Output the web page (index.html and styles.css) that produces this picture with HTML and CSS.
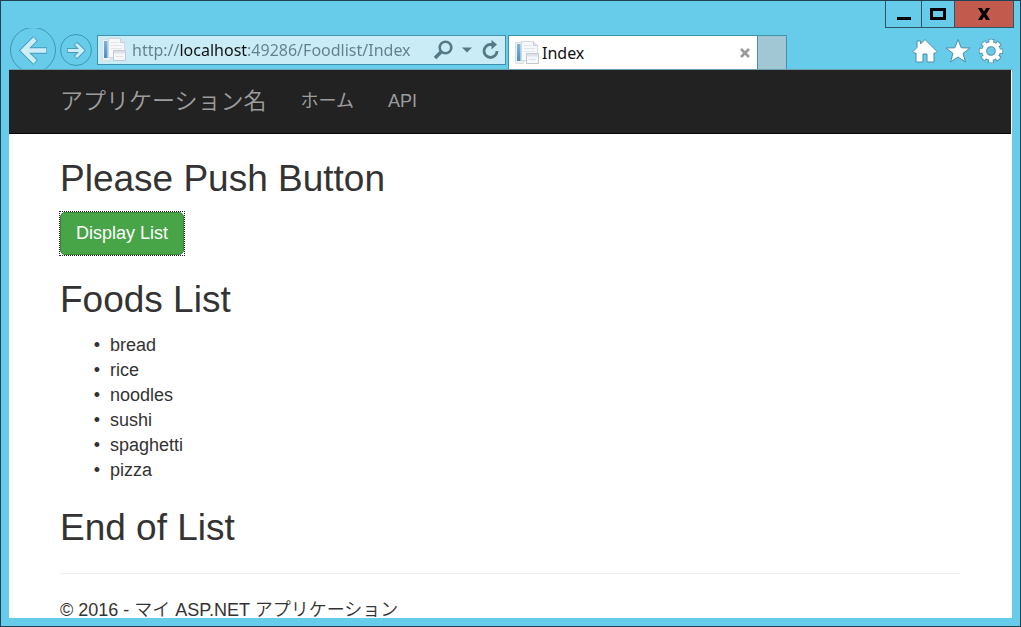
FILE: index.html
```html
<!DOCTYPE html>
<html lang="ja">
<head>
<meta charset="utf-8">
<title>Index</title>
<link rel="stylesheet" href="styles.css">
</head>
<body>
<div class="window">
  <div class="titlebar">
    <button class="win-btn minimize" type="button" aria-label="Minimize"><svg width="16" height="16" viewBox="0 0 16 16"><path d="M1 11h14v3H1z"/></svg></button>
    <button class="win-btn maximize" type="button" aria-label="Maximize"><svg width="16" height="12" viewBox="0 0 16 12"><path fill-rule="evenodd" d="M0 0h16v12H0zM3 3v6h10V3z"/></svg></button>
    <button class="win-btn close" type="button" aria-label="Close"><svg width="14" height="12" viewBox="0 0 14 12"><path d="M1 0h4l2 3.500L9 0h4L9.200 6 13 12H9L7 8.500 5 12H1l3.800-6z"/></svg></button>
  </div>

  <div class="toolbar">
    <button class="nav-btn back" type="button" aria-label="Back"><svg width="48" height="42" viewBox="0 0 48 42" fill="none"><circle cx="24" cy="22" r="22.500" stroke="#3f96b3"/><path d="M26.500 10.500 14.500 22.500l12 12M14 22.500h24" stroke="#459bb8" stroke-width="6.500"/><path d="M26 11 14.500 22.500 26 34M14 22.500h23.300" stroke="#cdeef8" stroke-width="4.600"/></svg></button>
    <button class="nav-btn forward" type="button" aria-label="Forward"><svg width="35" height="42" viewBox="0 0 35 42" fill="none"><circle cx="19" cy="22" r="15.500" stroke="#3f96b3"/><path d="m18.500 15.500 7 7-7 7M26 22.500H10" stroke="#459bb8" stroke-width="4.800"/><path d="m19 16 6.500 6.500L19 29M26 22.500H10.800" stroke="#cdeef8" stroke-width="3"/></svg></button>

    <form class="address">
      <svg class="page-icon" width="24" height="24" viewBox="0 0 24 24" aria-hidden="true"><use href="#page"/></svg>
      <input class="url" type="text" aria-label="Address" value="http://localhost:49286/Foodlist/Index">
      <div class="address-tools">
        <button class="tool search" type="submit" aria-label="Search"><svg width="20" height="20" viewBox="0 0 20 20" fill="none" stroke="#547a86"><circle cx="12.500" cy="7.500" r="5.800" stroke-width="2.600"/><path d="m8.500 11.500-6.500 6.500" stroke-width="3.600"/></svg></button>
        <button class="tool menu" type="button" aria-label="Show address list"><svg width="10" height="6" viewBox="0 0 10 6"><path d="M0 .5h10l-5 5z" fill="#547a86"/></svg></button>
        <button class="tool refresh" type="button" aria-label="Refresh"><svg width="18" height="20" viewBox="0 0 18 20"><path d="M11 4.500H9.500a6.500 6.500 0 1 0 6.500 6.500" fill="none" stroke="#547a86" stroke-width="2.800"/><path d="M10.500 0v9.500l5.500-5z" fill="#547a86"/></svg></button>
      </div>
    </form>

    <div class="tab">
      <svg class="page-icon" width="24" height="24" viewBox="0 0 24 24" aria-hidden="true"><use href="#page"/></svg>
      <span class="tab-title">Index</span>
      <button class="tool tab-close" type="button" aria-label="Close tab"><svg width="10" height="10" viewBox="0 0 10 10"><path d="m1 1 8 8M9 1 1 9" stroke="#9a9a9a" stroke-width="2.600"/></svg></button>
    </div>
    <button class="new-tab" type="button" aria-label="New tab"></button>

    <div class="actions">
      <button class="tool" type="button" aria-label="Home"><svg width="26" height="26" viewBox="0 0 26 26"><path d="M13 1.500 8.500 6V3H5v6.500L1 13.500l1.500 1.500H4v9h7v-8h4v8h7v-9h1.500l1.500-1.500z" fill="#fff" stroke="#4b8fa8"/></svg></button>
      <button class="tool" type="button" aria-label="Favorites"><svg width="26" height="26" viewBox="0 0 26 26"><path d="m13 1.500 3.200 8.300 8.800.2-7 5.400 2.500 8.600-7.500-5-7.500 5L8 15.400 1 10l8.800-.2z" fill="#fff" stroke="#4b8fa8"/></svg></button>
      <button class="tool" type="button" aria-label="Tools"><svg width="26" height="26" viewBox="0 0 26 26" fill="none">
        <circle cx="13" cy="13" r="9.800" stroke="#4b8fa8" stroke-width="4.800" stroke-dasharray="5.400 2.297" stroke-dashoffset="2.700"/>
        <circle cx="13" cy="13" r="6.800" stroke="#4b8fa8" stroke-width="6"/>
        <circle cx="13" cy="13" r="9.500" stroke="#fff" stroke-width="3.800" stroke-dasharray="3.800 3.661" stroke-dashoffset="1.900"/>
        <circle cx="13" cy="13" r="6.900" stroke="#fff" stroke-width="4.200"/>
      </svg></button>
    </div>
  </div>

  <main class="page">
    <nav class="navbar">
      <div class="container nav-row">
        <a class="brand" href="#">アプリケーション名</a>
        <a class="nav-link" href="#">ホーム</a>
        <a class="nav-link" href="#">API</a>
      </div>
    </nav>
    <div class="container">
      <h2>Please Push Button</h2>
      <div class="focus-frame">
        <button class="btn-success" type="button">Display List</button>
      </div>
      <h2>Foods List</h2>
      <ul class="foods">
        <li>bread</li>
        <li>rice</li>
        <li>noodles</li>
        <li>sushi</li>
        <li>spaghetti</li>
        <li>pizza</li>
      </ul>
      <h2>End of List</h2>
      <hr>
      <footer>© 2016 - マイ ASP.NET アプリケーション</footer>
    </div>
  </main>
</div>

<svg class="symbols" width="0" height="0" aria-hidden="true">
  <defs>
    <linearGradient id="blue" x1="0" y1="0" x2="0" y2="1"><stop offset="0" stop-color="#7db4dc"/><stop offset="1" stop-color="#4a90c6"/></linearGradient>
    <symbol id="page" viewBox="0 0 24 24">
      <path d="M.5 1.500h8v21h-8z" fill="#eef2f7" stroke="#d9dfe6"/>
      <path d="M2 3h3.500v17H2z" fill="url(#blue)"/>
      <path d="M6.500.5h12l4 4v15h-16z" fill="#f7f8fa" stroke="#d3d7dd"/>
      <path d="M18.500.5v4h4" fill="#e4e7ec" stroke="#c9ced5"/>
      <path d="M9 4.500h8M9 7.500h11M9 10.500h11" stroke="#e1e4e9"/>
      <path d="M11.500 12.500h12v10h-12z" fill="#f6f7fa" stroke="#c3c8d2"/>
      <path d="M12 13h11v2.500H12z" fill="#dde1e9"/>
      <path d="M14 18.500h7" stroke="#dde1e8"/>
    </symbol>
  </defs>
</svg>
</body>
</html>
```
FILE: styles.css
```css
* { box-sizing: border-box; }

body {
  margin: 0;
  font-family: "Liberation Sans", "Noto Sans CJK JP", sans-serif;
  font-size: 18px;
  line-height: 25px;
  color: #333;
}

button {
  margin: 0;
  padding: 0;
  border: 0;
  background: none;
  font: inherit;
}

svg { display: block; }

.symbols { position: absolute; }

.window {
  display: flex;
  flex-direction: column;
  height: 100vh;
  padding: 0 8px 8px;
  overflow: hidden;
  border: 1px solid #1f4352;
  background: #67cbea;
}

.titlebar {
  display: flex;
  justify-content: flex-end;
  flex: none;
  height: 27px;
  margin-right: -2px;
}

.win-btn {
  display: flex;
  align-items: center;
  justify-content: center;
  width: 33px;
  border: solid #2c5665;
  border-width: 0 0 1px 1px;
}

.minimize { width: 36px; }

.close {
  width: 60px;
  border-right-width: 1px;
  background: #c25a4e;
}

.toolbar {
  display: flex;
  flex: none;
  height: 42px;
  overflow: hidden;
  border-bottom: 1px solid #6b9fb1;
}

.nav-btn { flex: none; }

.address {
  display: flex;
  flex: 0 1 409px;
  align-items: center;
  gap: 6px;
  height: 30px;
  min-width: 0;
  margin: 7px 2px 0 5px;
  padding: 0 6px 0 4px;
  border: 1px solid #4292ae;
  background: #c9ecf7;
}

.page-icon { flex: none; }

.url {
  flex: 1;
  min-width: 0;
  padding: 0;
  border: 0;
  outline: 0;
  font: 16px/24px "Noto Sans", sans-serif;
  color: transparent;
  background: linear-gradient(90deg, #63808a 48px, #111 48px, #111 115px, #63808a 115px);
  -webkit-background-clip: text;
  background-clip: text;
}

.address-tools {
  display: flex;
  align-items: center;
  gap: 9px;
}

.tool { flex: none; }

.tab {
  display: flex;
  flex: 0 1 250px;
  align-items: center;
  gap: 3px;
  min-width: 0;
  margin-top: 7px;
  padding: 0 7px 0 6px;
  border: solid #4292ae;
  border-width: 1px 1px 0;
  background: #fff;
}

.tab-title {
  flex: 1;
  font: 16px/24px "Noto Sans", sans-serif;
  color: #111;
}

.new-tab {
  flex: none;
  width: 29px;
  margin-top: 7px;
  border: solid #4292ae;
  border-width: 1px 1px 0 0;
  background: #a1c7d5;
}

.actions {
  display: flex;
  align-items: center;
  gap: 7px;
  margin-left: auto;
  padding: 5px 8px 0 0;
}

.page {
  flex: 1;
  min-height: 0;
  padding-right: 1px;
  overflow: hidden;
  background: #fff;
}

.container {
  max-width: 900px;
  margin: 0 auto;
}

.navbar {
  border-bottom: 1px solid #080808;
  background: #222;
}

.nav-row {
  display: flex;
  align-items: center;
  gap: 34px;
  height: 63px;
}

.brand,
.nav-link {
  color: #9d9d9d;
  text-decoration: none;
}

.brand {
  font-size: 23px;
  font-weight: 350;
}

h2 {
  margin: 24px 0 12px;
  font-size: 37px;
  font-weight: 400;
  line-height: 42px;
}

.focus-frame {
  width: fit-content;
  outline: 1px dotted #222;
}

.btn-success {
  display: block;
  padding: 8px 15px;
  border: 1px solid #398439;
  border-radius: 5px;
  background: #47a447;
  color: #fff;
}

.foods {
  margin: 0 0 12px;
  padding-left: 50px;
  list-style-type: "•\a0\a0";
}

hr {
  margin: 24px 0;
  border: 0;
  border-top: 1px solid #eee;
}

footer {
  font-weight: 350;
  white-space: nowrap;
}
```
